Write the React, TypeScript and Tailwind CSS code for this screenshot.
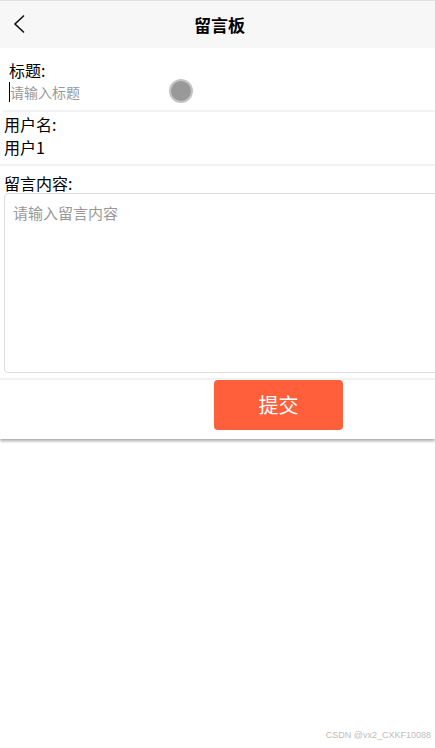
import React from 'react';

const font = { fontFamily: '"Noto Sans CJK SC", "Noto Sans", sans-serif' };

const App: React.FC = () => {
  return (
    <div className="relative min-h-[748px] bg-white text-black font-['Noto_Sans_CJK_SC',sans-serif] overflow-hidden">
      <div className="shadow-[0_2px_3px_rgba(0,0,0,0.35)] bg-white pb-[9px]">
        {/* Header */}
        <div className="border-t border-[#e3e3e3] h-[48px] bg-[#f7f7f7] relative flex items-center justify-center">
          <svg className="absolute left-[12px] top-[13px]" width="14" height="20" viewBox="0 0 14 20" fill="none">
            <path d="M12 1.5 L3 10 L12 18.5" stroke="#111" strokeWidth="1.6" />
          </svg>
          <h1 className="text-[17px] font-bold leading-none ml-[4px]">留言板</h1>
        </div>

        {/* Title */}
        <div className="pt-[12px] pb-[6px] pl-[9px] relative">
          <div className="text-[16px] leading-[20px]">标题:</div>
          <div className="flex items-center h-[24px]">
            <span className="w-[1px] h-[20px] bg-black" />
            <span className="text-[14px] text-[#9a9a9a] leading-[20px]">请输入标题</span>
          </div>
          <div className="absolute left-[169px] top-[31px] w-[24px] h-[24px] rounded-full bg-[#999] border-2 border-[#c4c4c4]" />
        </div>
        <div className="ml-[3px] h-[2px] bg-[#f2f2f2]" />

        {/* Username */}
        <div className="pt-[2px] pb-[6px] pl-[4px]">
          <div className="text-[16px] leading-[20px]">用户名:</div>
          <div className="text-[16px] leading-[22px] mt-[2px]">用户1</div>
        </div>
        <div className="h-[2px] bg-[#f2f2f2]" />

        {/* Content */}
        <div className="pt-[7px] pb-[5px] pl-[4px]">
          <div className="text-[16px] leading-[20px]">留言内容:</div>
          <div className="w-[440px] h-[180px] border border-[#dedede] rounded-[4px] px-[8px] py-[6px]">
            <span className="text-[15px] text-[#999] leading-[20px]" style={font}>请输入留言内容</span>
          </div>
        </div>
        <div className="h-[2px] bg-[#f2f2f2]" />

        {/* Submit */}
        <div className="pl-[214px]">
          <button className="w-[129px] h-[50px] rounded-[4px] bg-[#ff5f3a] text-white text-[20px] flex items-center justify-center">
            提交
          </button>
        </div>
      </div>

      <div className="absolute right-[4px] bottom-[6px] text-[9px] text-[#bdbdbd] font-['Liberation_Sans',sans-serif]">
        CSDN @vx2_CXKF10088
      </div>
    </div>
  );
};

export default App;
